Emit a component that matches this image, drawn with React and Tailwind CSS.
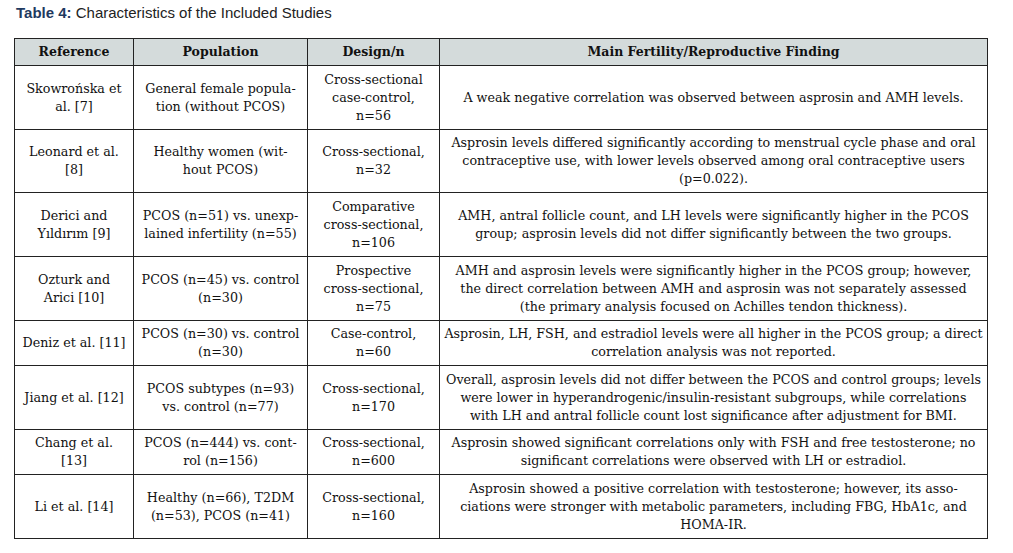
const rows = [
  {
    h: "h-[64px]",
    ref: ["Skowrońska et", "al. [7]"],
    pop: ["General female popula-", "tion (without PCOS)"],
    design: ["Cross-sectional", "case-control,", "n=56"],
    finding: ["A weak negative correlation was observed between asprosin and AMH levels."],
  },
  {
    h: "h-[63px]",
    ref: ["Leonard et al.", "[8]"],
    pop: ["Healthy women (wit-", "hout PCOS)"],
    design: ["Cross-sectional,", "n=32"],
    finding: [
      "Asprosin levels differed significantly according to menstrual cycle phase and oral",
      "contraceptive use, with lower levels observed among oral contraceptive users",
      "(p=0.022).",
    ],
  },
  {
    h: "h-[64px]",
    ref: ["Derici and", "Yıldırım [9]"],
    pop: ["PCOS (n=51) vs. unexp-", "lained infertility (n=55)"],
    design: ["Comparative", "cross-sectional,", "n=106"],
    finding: [
      "AMH, antral follicle count, and LH levels were significantly higher in the PCOS",
      "group; asprosin levels did not differ significantly between the two groups.",
    ],
  },
  {
    h: "h-[64px]",
    ref: ["Ozturk and", "Arici [10]"],
    pop: ["PCOS (n=45) vs. control", "(n=30)"],
    design: ["Prospective", "cross-sectional,", "n=75"],
    finding: [
      "AMH and asprosin levels were significantly higher in the PCOS group; however,",
      "the direct correlation between AMH and asprosin was not separately assessed",
      "(the primary analysis focused on Achilles tendon thickness).",
    ],
  },
  {
    h: "h-[45px]",
    ref: ["Deniz et al. [11]"],
    pop: ["PCOS (n=30) vs. control", "(n=30)"],
    design: ["Case-control,", "n=60"],
    finding: [
      "Asprosin, LH, FSH, and estradiol levels were all higher in the PCOS group; a direct",
      "correlation analysis was not reported.",
    ],
  },
  {
    h: "h-[64px]",
    ref: ["Jiang et al. [12]"],
    pop: ["PCOS subtypes (n=93)", "vs. control (n=77)"],
    design: ["Cross-sectional,", "n=170"],
    finding: [
      "Overall, asprosin levels did not differ between the PCOS and control groups; levels",
      "were lower in hyperandrogenic/insulin-resistant subgroups, while correlations",
      "with LH and antral follicle count lost significance after adjustment for BMI.",
    ],
  },
  {
    h: "h-[45px]",
    ref: ["Chang et al.", "[13]"],
    pop: ["PCOS (n=444) vs. cont-", "rol (n=156)"],
    design: ["Cross-sectional,", "n=600"],
    finding: [
      "Asprosin showed significant correlations only with FSH and free testosterone; no",
      "significant correlations were observed with LH or estradiol.",
    ],
  },
  {
    h: "h-[64px]",
    ref: ["Li et al. [14]"],
    pop: ["Healthy (n=66), T2DM", "(n=53), PCOS (n=41)"],
    design: ["Cross-sectional,", "n=160"],
    finding: [
      "Asprosin showed a positive correlation with testosterone; however, its asso-",
      "ciations were stronger with metabolic parameters, including FBG, HbA1c, and",
      "HOMA-IR.",
    ],
  },
];

function Lines({ lines }) {
  return lines.map((l, i) => (
    <div key={i} className="whitespace-nowrap">
      {l}
    </div>
  ));
}

export default function App() {
  const cell = "border border-[#222] px-1 text-center align-middle";
  return (
    <div className="w-[1013px] h-[553px] bg-white">
      {/* Caption */}
      <div className="pl-[16px] pt-[4px] h-[38px] text-[15px] leading-[18px] text-[#222] font-['Liberation_Sans',Arial,sans-serif]">
        <span className="font-bold text-[#1f3a60]">Table 4:</span> Characteristics of the Included Studies
      </div>

      <table className="ml-[14px] w-[973px] table-fixed border-collapse text-[12.7px] leading-[18px] text-[#111] font-['DejaVu_Serif',Georgia,serif]">
        <colgroup>
          <col className="w-[119px]" />
          <col className="w-[174px]" />
          <col className="w-[132px]" />
          <col className="w-[548px]" />
        </colgroup>
        <thead>
          <tr className="h-[27px] bg-[#d4dbdb] font-bold text-[12.5px]">
            <th className={cell}>Reference</th>
            <th className={cell}>Population</th>
            <th className={cell}>Design/n</th>
            <th className={cell}>Main Fertility/Reproductive Finding</th>
          </tr>
        </thead>
        <tbody>
          {rows.map((r, i) => (
            <tr key={i} className={r.h}>
              <td className={cell}>
                <Lines lines={r.ref} />
              </td>
              <td className={cell}>
                <Lines lines={r.pop} />
              </td>
              <td className={cell}>
                <Lines lines={r.design} />
              </td>
              <td className={cell}>
                <Lines lines={r.finding} />
              </td>
            </tr>
          ))}
        </tbody>
      </table>
    </div>
  );
}
